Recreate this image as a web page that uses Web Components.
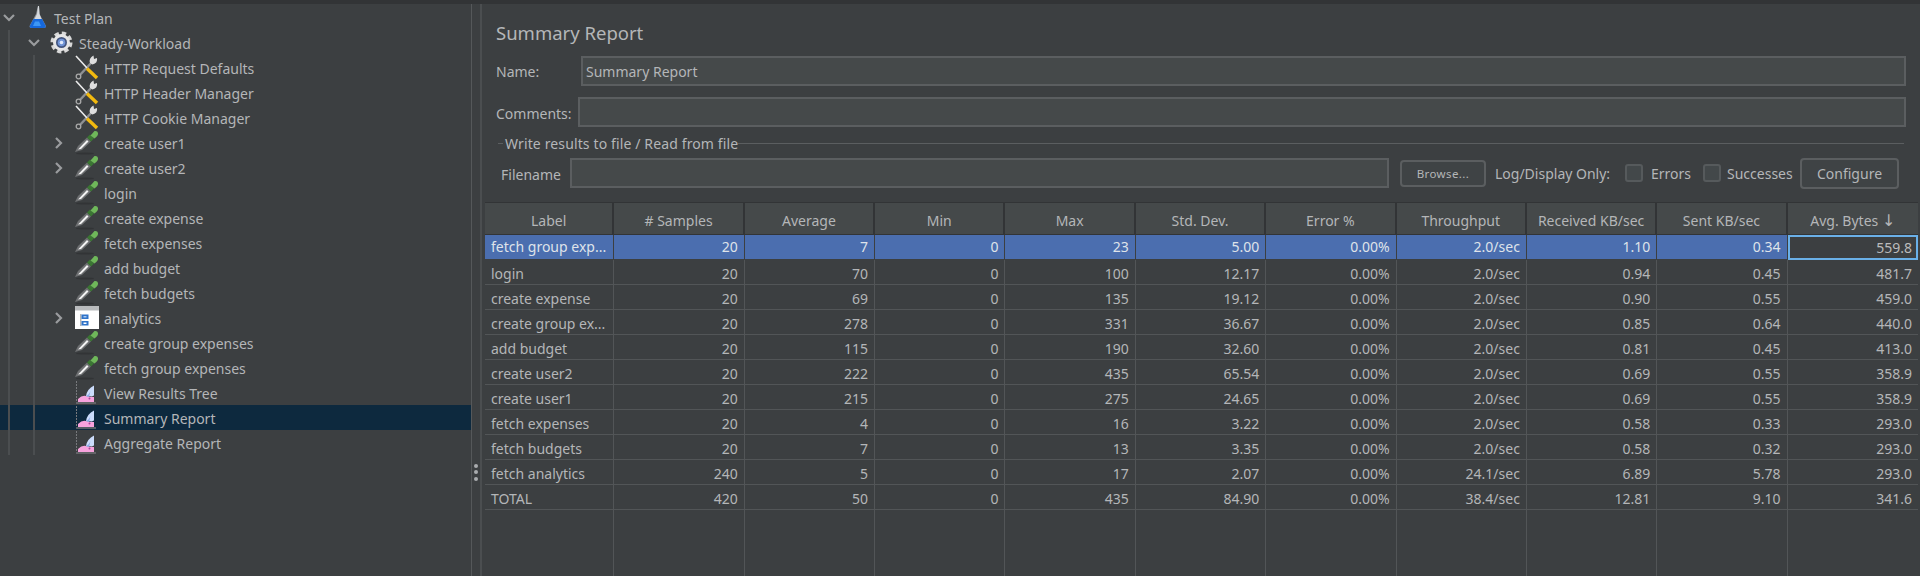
<!DOCTYPE html>
<html>
<head>
<meta charset="utf-8">
<title>Summary Report</title>
<style>
  html, body { margin: 0; height: 100%; background: #3c3f41; overflow: hidden; }
  body { font-family: "Noto Sans", sans-serif; font-size: 14px; color: #b4b6b8; }
</style>
</head>
<body>
<jm-app>
  <jm-tree slot="tree"></jm-tree>
  <jm-report slot="report"></jm-report>
</jm-app>

<script>
const ICONS = {
  flask: `<svg viewBox="0 0 24 25" width="24" height="25">
    <path d="M13 1l1 0 .5 8 6 11q1.500 3-2 3H7q-3.500 0-2-3l6-11z" fill="#8f9296"/>
    <path d="M13 1h1l.5 8 2 5h-7l2.500-5z" fill="#d5d8dc"/>
    <path d="M8.500 14h8.500l3.500 6.500q1 2.500-2 2.500H7q-3 0-2-2.500z" fill="#1668dc"/>
    <path d="M10 16.500h4l2 4.500H8z" fill="#3d97f5"/>
  </svg>`,
  gear: `<svg viewBox="0 0 24 25" width="24" height="25">
    <circle cx="11.500" cy="12.500" r="9" fill="none" stroke="#d8d8d8" stroke-width="4" stroke-dasharray="4.200 2.870"/>
    <circle cx="11.500" cy="12.500" r="8.500" fill="#e6e6e6"/>
    <circle cx="11.500" cy="12.500" r="5.500" fill="#43557f"/>
    <circle cx="11.500" cy="12.500" r="3.800" fill="#6f93d6"/>
    <circle cx="11.500" cy="12.500" r="1.800" fill="#dfe9fb"/>
  </svg>`,
  tools: `<svg viewBox="0 0 24 25" width="24" height="25">
    <path d="M4 21L17 7" stroke="#8e9093" stroke-width="2.400" fill="none"/>
    <circle cx="3.500" cy="21.500" r="2.300" fill="#3c3f41" stroke="#a8a8a8" stroke-width="1.300"/>
    <path d="M15 8q-1.500-5 3.500-7.500l.5 3.500 3-1q1 5-4.500 6.500z" fill="#dedede"/>
    <path d="M1 1l11 12" stroke="#ececec" stroke-width="1.600" fill="none"/>
    <path d="M12 13.500l10 9.500" stroke="#f2b90f" stroke-width="3.400" fill="none"/>
  </svg>`,
  dropper: `<svg viewBox="0 0 24 25" width="24" height="25">
    <ellipse cx="10" cy="23.500" rx="9" ry="1" fill="#323436"/>
    <path d="M0 22l3-6 9-8.500 4 4-9 8.500z" fill="#6f7173"/>
    <path d="M3 19.500L12 10l1.500 1.500L6 19z" fill="#f4f4f4"/>
    <path d="M12 7.500l3-3 4 4-3 3z" fill="#3b7733"/>
    <path d="M15.500 5.500l4-4.500q3-.5 3.500 2t-3.500 5.500z" fill="#6fb85a"/>
  </svg>`,
  page: `<svg viewBox="0 0 24 25" width="24" height="25">
    <rect x="0" y="1" width="24" height="23" fill="#ffffff"/>
    <rect x="0" y="1" width="24" height="4.500" fill="#b9bbbd"/>
    <rect x="5" y="9" width="1.500" height="12" fill="#b5b5b5"/>
    <rect x="6.500" y="9.500" width="7" height="4.500" fill="#2f73c9"/>
    <rect x="6.500" y="16" width="7" height="4.500" fill="#2f73c9"/>
    <rect x="8.500" y="17.500" width="3" height="1.500" fill="#fff"/>
    <rect x="8.500" y="11" width="3" height="1.500" fill="#a9c8ee"/>
  </svg>`,
  listener: `<svg viewBox="0 0 24 25" width="24" height="25">
    <path d="M1.500 1v21" stroke="#77797c" stroke-width="1" stroke-dasharray="2 1" fill="none"/>
    <path d="M1 23h20" stroke="#6f7174" stroke-width="1.500" fill="none"/>
    <path d="M3 22v-3q4-4 8-3t8 1v5z" fill="#f7a2dd"/>
    <path d="M11 16q1-7 8-10.500v10q-3 1.500-4 .5l-2 .5z" fill="#cbdcfb"/>
    <path d="M11 16q3-1 4.500-5L14 17z" fill="#8aa9e6"/>
    <circle cx="14.500" cy="18.500" r="1" fill="#a8459b"/>
  </svg>`
};

const TREE = [
  [0, "flask", "Test Plan", "open"],
  [1, "gear", "Steady-Workload", "open"],
  [2, "tools", "HTTP Request Defaults"],
  [2, "tools", "HTTP Header Manager"],
  [2, "tools", "HTTP Cookie Manager"],
  [2, "dropper", "create user1", "closed"],
  [2, "dropper", "create user2", "closed"],
  [2, "dropper", "login"],
  [2, "dropper", "create expense"],
  [2, "dropper", "fetch expenses"],
  [2, "dropper", "add budget"],
  [2, "dropper", "fetch budgets"],
  [2, "page", "analytics", "closed"],
  [2, "dropper", "create group expenses"],
  [2, "dropper", "fetch group expenses"],
  [2, "listener", "View Results Tree"],
  [2, "listener", "Summary Report", "", true],
  [2, "listener", "Aggregate Report"]
];

const COLUMNS = ["Label", "# Samples", "Average", "Min", "Max", "Std. Dev.", "Error %", "Throughput", "Received KB/sec", "Sent KB/sec", `Avg. Bytes <em>↓</em>`];

const ROWS = [
  ["fetch group exp...", 20, 7, 0, 23, "5.00", "0.00%", "2.0/sec", "1.10", "0.34", "559.8"],
  ["login", 20, 70, 0, 100, "12.17", "0.00%", "2.0/sec", "0.94", "0.45", "481.7"],
  ["create expense", 20, 69, 0, 135, "19.12", "0.00%", "2.0/sec", "0.90", "0.55", "459.0"],
  ["create group ex...", 20, 278, 0, 331, "36.67", "0.00%", "2.0/sec", "0.85", "0.64", "440.0"],
  ["add budget", 20, 115, 0, 190, "32.60", "0.00%", "2.0/sec", "0.81", "0.45", "413.0"],
  ["create user2", 20, 222, 0, 435, "65.54", "0.00%", "2.0/sec", "0.69", "0.55", "358.9"],
  ["create user1", 20, 215, 0, 275, "24.65", "0.00%", "2.0/sec", "0.69", "0.55", "358.9"],
  ["fetch expenses", 20, 4, 0, 16, "3.22", "0.00%", "2.0/sec", "0.58", "0.33", "293.0"],
  ["fetch budgets", 20, 7, 0, 13, "3.35", "0.00%", "2.0/sec", "0.58", "0.32", "293.0"],
  ["fetch analytics", 240, 5, 0, 17, "2.07", "0.00%", "24.1/sec", "6.89", "5.78", "293.0"],
  ["TOTAL", 420, 50, 0, 435, "84.90", "0.00%", "38.4/sec", "12.81", "9.10", "341.6"]
];

class JmApp extends HTMLElement {
  constructor() {
    super();
    this.attachShadow({mode: "open"}).innerHTML = `
      <style>
        :host { display: flex; flex-direction: column; height: 576px; width: 1920px; }
        .strip { height: 4px; background: #323436; flex: none; }
        .main { flex: 1; display: flex; min-height: 0; }
        .left { width: 471px; flex: none; border-right: 1px solid #55585a; }
        .split { width: 10px; flex: none; border-right: 2px solid #4b4e50; display: flex; flex-direction: column; align-items: center; justify-content: center; gap: 2.500px; padding-top: 364px; box-sizing: border-box; }
        .split i { width: 4px; height: 4px; border-radius: 50%; background: #a9acae; }
        .right { flex: 1; min-width: 0; }
      </style>
      <div class="strip"></div>
      <div class="main">
        <div class="left"><slot name="tree"></slot></div>
        <div class="split"><i></i><i></i><i></i></div>
        <div class="right"><slot name="report"></slot></div>
      </div>`;
  }
}

class JmTree extends HTMLElement {
  constructor() {
    super();
    this.attachShadow({mode: "open"}).innerHTML = `
      <style>
        :host { display: block; padding-top: 1px; }
      </style>
      <slot></slot>`;
  }
  connectedCallback() {
    for (const [depth, icon, label, state, selected] of TREE) {
      const node = document.createElement("jm-node");
      node.setAttribute("depth", depth);
      node.setAttribute("icon", icon);
      if (state) node.setAttribute("state", state);
      if (selected) node.setAttribute("selected", "");
      node.textContent = label;
      this.appendChild(node);
    }
  }
}

class JmNode extends HTMLElement {
  constructor() {
    super();
    this.attachShadow({mode: "open"});
  }
  connectedCallback() {
    const depth = Number(this.getAttribute("depth"));
    const state = this.getAttribute("state");
    let chevron = "";
    if (state == "open") chevron = `<svg width="14" height="10" viewBox="0 0 14 10"><path d="M2 2l5 5 5-5" fill="none" stroke="#9a9c9e" stroke-width="2.200"/></svg>`;
    if (state == "closed") chevron = `<svg width="10" height="14" viewBox="0 0 10 14"><path d="M2 2l5 5-5 5" fill="none" stroke="#9a9c9e" stroke-width="2.200"/></svg>`;
    this.shadowRoot.innerHTML = `
      <style>
        :host { display: flex; align-items: center; height: 25px; white-space: nowrap; }
        :host([selected]) { background: #0d293e; }
        .guide { width: 25px; height: 100%; flex: none; box-sizing: border-box; padding-left: 8px; }
        .guide::before { content: ""; display: block; width: 2px; height: 100%; background: #4b4e50; }
        .arrow { width: 18px; margin-right: 7px; flex: none; display: flex; justify-content: center; }
        .icon { width: 24px; height: 25px; flex: none; margin-right: 5px; }
        .text { padding-top: 2px; }
        svg { display: block; }
      </style>
      ${'<span class="guide"></span>'.repeat(depth)}
      <span class="arrow">${chevron}</span>
      <span class="icon">${ICONS[this.getAttribute("icon")]}</span>
      <span class="text"><slot></slot></span>`;
  }
}

class JmField extends HTMLElement {
  constructor() {
    super();
    this.attachShadow({mode: "open"}).innerHTML = `
      <style>
        :host { display: flex; align-items: center; height: 30px; }
        .label { flex: none; width: var(--label-width, 96px); padding-top: var(--label-pad, 0); }
        .box { flex: 1; height: 100%; box-sizing: border-box; background: #45494a; border: 2px solid #5b5e60; padding-left: 3px; display: flex; align-items: center; }
      </style>
      <span class="label"></span>
      <div class="box"><slot></slot></div>`;
  }
  connectedCallback() {
    this.shadowRoot.querySelector(".label").textContent = this.getAttribute("label");
  }
}

class JmButton extends HTMLElement {
  constructor() {
    super();
    this.attachShadow({mode: "open"}).innerHTML = `
      <style>
        :host { display: flex; align-items: center; justify-content: center; box-sizing: border-box; flex: none; background: #3f4345; border: 2px solid #5b5e60; border-radius: 4px; }
      </style>
      <slot></slot>`;
  }
}

class JmCheck extends HTMLElement {
  constructor() {
    super();
    this.attachShadow({mode: "open"}).innerHTML = `
      <style>
        :host { display: flex; align-items: center; gap: var(--check-gap, 8px); flex: none; box-sizing: border-box; }
        i { width: 18px; height: 18px; flex: none; box-sizing: border-box; background: #43484a; border: 2px solid #565a5c; border-radius: 3px; }
      </style>
      <i></i><slot></slot>`;
  }
}

class JmFileBar extends HTMLElement {
  constructor() {
    super();
    this.attachShadow({mode: "open"}).innerHTML = `
      <style>
        :host { display: block; margin: 6px 16px 0 16px; }
        .legend { display: flex; align-items: center; height: 20px; letter-spacing: .13px; }
        .legend::before { content: ""; width: 5px; height: 1px; background: #5b5e60; margin-right: 2px; }
        .legend::after { content: ""; flex: 1; height: 1px; background: #5b5e60; }
        .row { display: flex; align-items: center; height: 30px; margin-top: 5px; padding-left: 3px; }
        .row .name { width: 69px; flex: none; padding-top: 2px; }
        .file { width: 819px; height: 100%; flex: none; box-sizing: border-box; background: #45494a; border: 2px solid #5b5e60; }
        jm-button.browse { width: 86px; height: 27px; margin-left: 11px; font-size: 11.500px; letter-spacing: .4px; }
        .only { margin-left: 9px; flex: none; width: 117px; margin-right: 13px; white-space: nowrap; }
        jm-check { width: 78px; }
        jm-check.last { width: 97px; --check-gap: 6px; }
        jm-button.conf { width: 99px; height: 31px; }
      </style>
      <div class="legend">Write results to file / Read from file</div>
      <div class="row">
        <span class="name">Filename</span>
        <div class="file"></div>
        <jm-button class="browse">Browse...</jm-button>
        <span class="only">Log/Display Only:</span>
        <jm-check>Errors</jm-check>
        <jm-check class="last">Successes</jm-check>
        <jm-button class="conf">Configure</jm-button>
      </div>`;
  }
}

class JmTable extends HTMLElement {
  constructor() {
    super();
    this.attachShadow({mode: "open"});
  }
  connectedCallback() {
    const cells = (row, tag = "span") => row.map(v => `<${tag}>${v}</${tag}>`).join("");
    this.shadowRoot.innerHTML = `
      <style>
        :host { display: flex; flex-direction: column; height: 374px; box-sizing: border-box; }
        .head, .row, .fill { display: grid; grid-template-columns: 129.400px repeat(10, 1fr); flex: none; }
        .head { height: 33px; border-top: 1px solid #323436; box-sizing: border-box; grid-template-rows: 32px; }
        .head b { font-weight: 400; background: #45494a; text-align: center; line-height: 35px; border-right: 2px solid #323436; border-bottom: 1px solid #323436; box-sizing: border-box; white-space: nowrap; overflow: hidden; }
        .head em { font-style: normal; font-family: "DejaVu Sans", sans-serif; font-size: 16px; line-height: 1; }
        .row { height: 25px; grid-template-rows: 25px; }
        .row span { box-sizing: border-box; line-height: 24px; text-align: right; padding: 2px 6px 0; border-right: 1px solid #525557; border-bottom: 1px solid #525557; white-space: nowrap; overflow: hidden; }
        .row span:first-child { text-align: left; }
        .row.sel { color: #dfe3ea; }
        .row.sel span { padding-top: 0; background: #4b6eaf; border-right-color: #3c3f41; border-bottom-color: #3c3f41; }
        .row.sel span:last-child { background: #3c3f41; color: #bbbbbb; box-shadow: inset 0 0 0 2px #6ab0e8; border: 0; line-height: 25px; }
        .fill { flex: 1; }
        .fill i { border-right: 1px solid #525557; }
        :is(.head, .row, .fill) > :last-child { border-right: 0; }
      </style>
      <div class="head">${cells(COLUMNS, "b")}</div>
      ${ROWS.map((r, i) => `<div class="row ${i == 0 ? "sel" : ""}">${cells(r)}</div>`).join("")}
      <div class="fill">${"<i></i>".repeat(11)}</div>`;
  }
}

class JmReport extends HTMLElement {
  constructor() {
    super();
    this.attachShadow({mode: "open"}).innerHTML = `
      <style>
        :host { display: block; }
        .top { padding: 0 14px 0 14px; }
        h2 { margin: 0; font-weight: 400; font-size: 18.500px; line-height: 26px; padding-top: 16px; }
        .name { margin-top: 10px; --label-width: 85px; }
        .comments { margin-top: 11px; --label-width: 82px; --label-pad: 2px; }
        jm-table { margin: 14px 2px 0 3px; }
      </style>
      <div class="top">
        <h2>Summary Report</h2>
        <jm-field class="name" label="Name:">Summary Report</jm-field>
        <jm-field class="comments" label="Comments:"></jm-field>
      </div>
      <jm-filebar></jm-filebar>
      <jm-table></jm-table>`;
  }
}

customElements.define("jm-app", JmApp);
customElements.define("jm-tree", JmTree);
customElements.define("jm-node", JmNode);
customElements.define("jm-field", JmField);
customElements.define("jm-button", JmButton);
customElements.define("jm-check", JmCheck);
customElements.define("jm-filebar", JmFileBar);
customElements.define("jm-table", JmTable);
customElements.define("jm-report", JmReport);
</script>
</body>
</html>
